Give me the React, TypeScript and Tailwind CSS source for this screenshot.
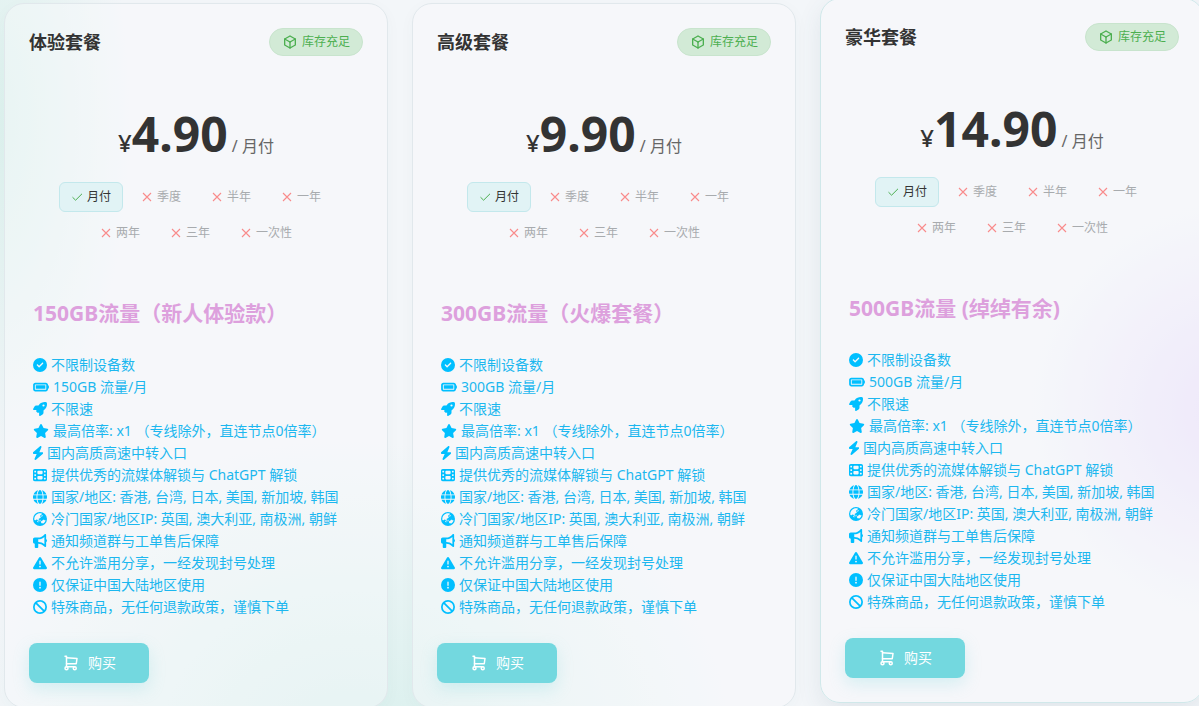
import type { ReactNode } from 'react';
import {
    FaBan,
    FaBatteryFull,
    FaBullhorn,
    FaCircleCheck,
    FaCircleExclamation,
    FaEarthAsia,
    FaFilm,
    FaGlobe,
    FaRocket,
    FaStar,
    FaTriangleExclamation,
} from 'react-icons/fa6';
import { TbBox, TbShoppingCart } from 'react-icons/tb';

interface PlanProps {
    name: string;
    price: string;
    heading: string;
    traffic: string;
    active?: boolean;
}

const plans: PlanProps[] = [
    { name: '体验套餐', price: '4.90', heading: '150GB流量（新人体验款）', traffic: '150GB' },
    { name: '高级套餐', price: '9.90', heading: '300GB流量（火爆套餐）', traffic: '300GB' },
    { name: '豪华套餐', price: '14.90', heading: '500GB流量 (绰绰有余)', traffic: '500GB', active: true },
];

const periods = ['月付', '季度', '半年', '一年', '两年', '三年', '一次性'];

const CheckIcon = () => (
    <svg viewBox="0 0 12 12" className="h-3 w-3 shrink-0 overflow-visible text-[#4caf50]" fill="none" stroke="currentColor">
        <path d="M1.5 6.2 4.6 9.2 11 2.8" />
    </svg>
);

const CrossIcon = () => (
    <svg viewBox="0 0 12 12" className="h-3 w-3 shrink-0 text-[#f98b8b]" fill="none" stroke="currentColor" strokeWidth="1.1">
        <path d="M2 2 10 10M10 2 2 10" />
    </svg>
);

// narrow bolt, the fa6 one has a wider box
const BoltIcon = () => (
    <svg viewBox="0 0 384 512" className="w-[10px]!" fill="currentColor" preserveAspectRatio="xMidYMid slice">
        <path d="M240.5 224H352C365.3 224 377.3 232.3 381.1 244.7C386.6 257.2 383.1 271.3 373.1 280.1L117.1 504.1C105.8 513.9 89.27 514.7 77.19 505.9C65.1 497.1 60.7 481.1 66.59 467.4L143.5 288H31.1C18.67 288 6.733 279.7 2.044 267.3C-2.645 254.8 .8944 240.7 10.93 231.9L266.9 7.918C278.2-1.92 294.7-2.669 306.8 6.114C318.9 14.9 323.3 30.87 317.4 44.61L240.5 224z" />
    </svg>
);

const Feature = ({ icon, children }: { icon: ReactNode; children: ReactNode }) => (
    <li className="flex items-center gap-1">
        <span className="shrink-0">{icon}</span>
        <span>{children}</span>
    </li>
);

const PlanCard = ({ name, price, heading, traffic, active }: PlanProps) => {
    return (
        <section
            className={
                active
                    ? 'flex -translate-y-[5px] flex-col rounded-[20px] border border-[#d0e8ea] bg-[#f9fafd]/40 p-6 shadow-[0_8px_24px_rgba(60,90,110,0.10)]'
                    : 'flex flex-col rounded-[20px] border border-[#e1e8ec] bg-[#f9fafd]/40 p-6 shadow-[0_4px_16px_rgba(60,90,110,0.03)]'
            }
        >
            <div className="flex items-center justify-between">
                <h2 className="text-lg leading-7 font-bold text-[#333]">{name}</h2>
                <span className="flex h-7 items-center gap-1 rounded-full border border-[#c8e4cd] bg-[#d2ead6] px-3 text-xs text-[#4caf50]">
                    <TbBox size={16} />
                    库存充足
                </span>
            </div>

            <p className="mt-12 text-center leading-[60px] whitespace-nowrap text-[#333]">
                <span className="text-2xl leading-[60px] font-medium">¥</span>
                <span className="text-5xl leading-[60px] font-bold">{price}</span>
                <span className="text-base leading-[60px] text-[#666]"> / 月付</span>
            </p>

            <div className="mt-[6px] flex flex-wrap justify-center gap-[6px]">
                {periods.map((period, i) => (
                    <button
                        key={period}
                        type="button"
                        disabled={i > 0}
                        className={
                            i === 0
                                ? 'flex h-[30px] items-center gap-1 rounded-md border border-[#c3e8ec] bg-[#e1f3f5] px-[11px] text-xs text-[#333]'
                                : 'flex h-[30px] items-center gap-1 rounded-md border border-transparent px-[11px] text-xs text-[#a8abae]'
                        }
                    >
                        {i === 0 ? <CheckIcon /> : <CrossIcon />}
                        {period}
                    </button>
                ))}
            </div>

            <div className="mt-[50px] px-1 text-sm text-[#1cb7ef]">
                <h3 className="text-[21px] leading-[30px] font-bold text-[#dda0dd]">{heading}</h3>
                <ul className="mt-[26px] leading-[22px] [&_svg]:h-[14px] [&_svg]:w-[14px] [&_svg]:text-[#00bfff]">
                    <Feature icon={<FaCircleCheck />}>不限制设备数</Feature>
                    <Feature icon={<FaBatteryFull className="w-4!" />}>{traffic} 流量/月</Feature>
                    <Feature icon={<FaRocket />}>不限速</Feature>
                    <Feature icon={<FaStar className="w-4!" />}>最高倍率: x1 （专线除外，直连节点0倍率）</Feature>
                    <Feature icon={<BoltIcon />}>国内高质高速中转入口</Feature>
                    <Feature icon={<FaFilm />}>提供优秀的流媒体解锁与 ChatGPT 解锁</Feature>
                    <Feature icon={<FaGlobe />}>国家/地区: 香港, 台湾, 日本, 美国, 新加坡, 韩国</Feature>
                    <Feature icon={<FaEarthAsia />}>冷门国家/地区IP: 英国, 澳大利亚, 南极洲, 朝鲜</Feature>
                    <Feature icon={<FaBullhorn />}>通知频道群与工单售后保障</Feature>
                    <Feature icon={<FaTriangleExclamation />}>不允许滥用分享，一经发现封号处理</Feature>
                    <Feature icon={<FaCircleExclamation />}>仅保证中国大陆地区使用</Feature>
                    <Feature icon={<FaBan />}>特殊商品，无任何退款政策，谨慎下单</Feature>
                </ul>
            </div>

            <button
                type="button"
                className="mt-[25px] flex h-10 w-[120px] items-center justify-center gap-2 rounded-lg bg-[#73d8df] text-sm text-white shadow-[0_6px_16px_rgba(115,216,223,0.25)]"
            >
                <TbShoppingCart size={18} />
                购买
            </button>
        </section>
    );
};

const App = () => {
    return (
        <main className="min-h-screen overflow-hidden bg-[#f3f6f9] bg-[radial-gradient(140px_340px_at_-10px_120px,#dcf1ed_0%,#dcf1ed00_100%),radial-gradient(380px_300px_at_350px_740px,#d9f0ed_0%,#d9f0ed00_100%),radial-gradient(circle_at_1240px_410px,#e6dbf8_0px,#e6dbf800_210px)] pt-[3px] pl-1 font-['Noto_Sans','Noto_Sans_CJK_SC',sans-serif]">
            <div className="-mr-[5px] grid grid-cols-3 gap-6">
                {plans.map((plan) => (
                    <PlanCard key={plan.name} {...plan} />
                ))}
            </div>
        </main>
    );
};

export default App;
